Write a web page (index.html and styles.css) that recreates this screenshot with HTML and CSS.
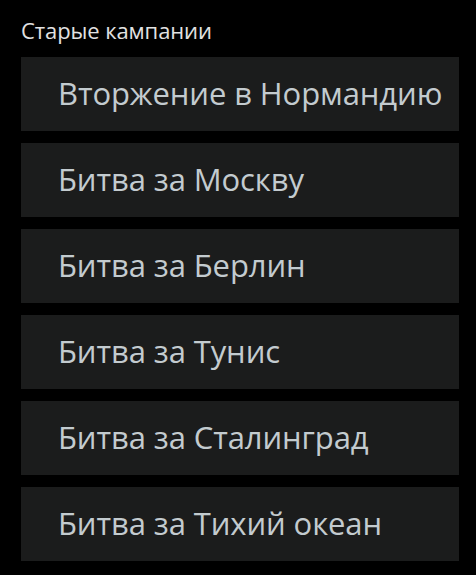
FILE: index.html
```html
<!DOCTYPE html>
<html>
<head>
<meta charset="utf-8">
<link rel="stylesheet" href="styles.css">
</head>
<body>
<div class="panel">
  <div class="title">Старые кампании</div>
  <div class="list">
    <div class="item">Вторжение в Нормандию</div>
    <div class="item">Битва за Москву</div>
    <div class="item">Битва за Берлин</div>
    <div class="item">Битва за Тунис</div>
    <div class="item">Битва за Сталинград</div>
    <div class="item">Битва за Тихий океан</div>
  </div>
</div>
</body>
</html>
```

FILE: styles.css
```css
html, body {
  margin: 0;
  padding: 0;
  background: #000;
}
.panel {
  padding: 17px 17px 0 21px;
  font-family: "Open Sans", sans-serif;
}
.title {
  color: #e2e2e2;
  font-size: 22px;
  line-height: 27px;
  height: 27px;
  margin-bottom: 13px;
  letter-spacing: -0.1px;
}
.list {
  display: flex;
  flex-direction: column;
  gap: 12px;
}
.item {
  height: 74px;
  box-sizing: border-box;
  padding-bottom: 2px;
  background: #1b1c1c;
  color: #c3cbcf;
  font-size: 31px;
  letter-spacing: -0.1px;
  display: flex;
  align-items: center;
  padding-left: 37px;
  white-space: nowrap;
}
```
